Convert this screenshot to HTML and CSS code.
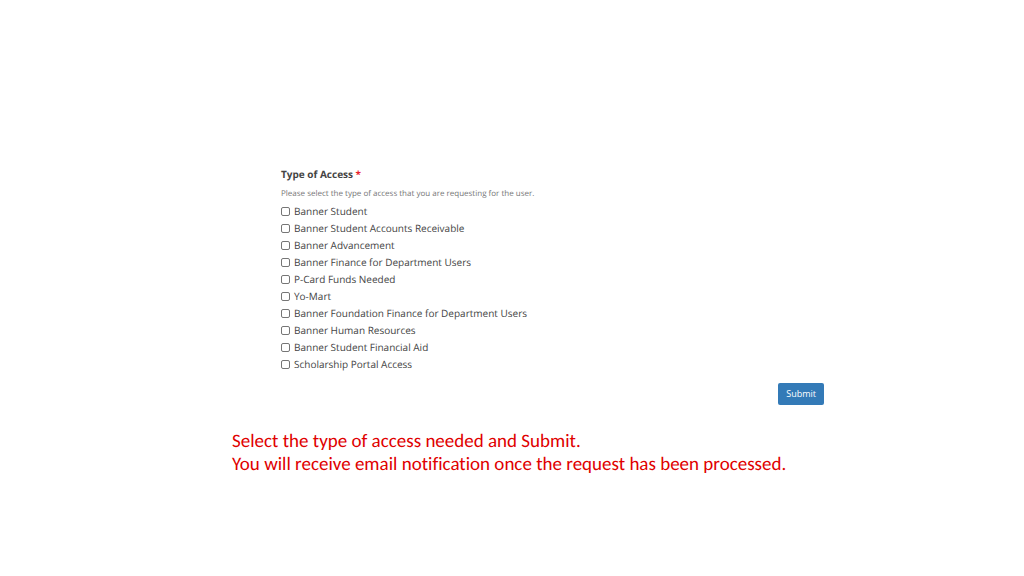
FILE: index.html
```
<!DOCTYPE html>
<html lang="en">
<head>
    <meta charset="UTF-8">
    <meta name="viewport" content="width=device-width, initial-scale=1.0">
    <title>Type of Access</title>
    <link rel="stylesheet" href="styles.css">
</head>
<body>
    <main>
        <form class="access-form">
            <fieldset>
                <legend>Type of Access <span class="required">*</span></legend>
                <p class="hint">Please select the type of access that you are requesting for the user.</p>
                <label><input type="checkbox" name="access"> Banner Student</label>
                <label><input type="checkbox" name="access"> Banner Student Accounts Receivable</label>
                <label><input type="checkbox" name="access"> Banner Advancement</label>
                <label><input type="checkbox" name="access"> Banner Finance for Department Users</label>
                <label><input type="checkbox" name="access"> P-Card Funds Needed</label>
                <label><input type="checkbox" name="access"> Yo-Mart</label>
                <label><input type="checkbox" name="access"> Banner Foundation Finance for Department Users</label>
                <label><input type="checkbox" name="access"> Banner Human Resources</label>
                <label><input type="checkbox" name="access"> Banner Student Financial Aid</label>
                <label><input type="checkbox" name="access"> Scholarship Portal Access</label>
            </fieldset>
            <button type="submit">Submit</button>
        </form>
        <p class="note">Select the type of access needed and Submit.<br>You will receive email notification once the request has been processed.</p>
    </main>
</body>
</html>
```
FILE: styles.css
```
* {
    box-sizing: border-box;
}
body {
    margin: 0;
    background-color: white;
    font-family: "Open Sans", sans-serif;
    color: #444;
    text-rendering: geometricPrecision;
}
main {
    max-width: 624px;
    margin: 0 auto;
    padding-top: 166px;
}
.access-form {
    display: flex;
    flex-direction: column;
    margin-left: 81px;
}
fieldset {
    margin: 0;
    padding: 0;
    border: none;
    min-width: 0;
}
legend {
    padding: 0;
    font-size: 10px;
    line-height: 17px;
    font-weight: bold;
}
.required {
    color: #e8202a;
}
.hint {
    margin: 3px 0 2px;
    font-size: 8px;
    line-height: 15px;
    color: #777;
}
label {
    display: flex;
    align-items: center;
    gap: 4px;
    font-size: 10px;
    line-height: 17px;
}
input {
    appearance: none;
    width: 9px;
    height: 9px;
    margin: 0;
    border: 1px solid #767676;
    border-radius: 2px;
    background-color: white;
}
input:checked {
    background-color: #337ab7;
}
button {
    align-self: flex-end;
    margin-top: 10px;
    padding: 0 8px;
    border: none;
    border-radius: 2px;
    background-color: #337ab7;
    color: white;
    font-family: inherit;
    font-size: 9px;
    line-height: 22px;
}
.note {
    margin: 25px 0 0 32px;
    color: #e00000;
    font-family: Carlito, Calibri, Lato, sans-serif;
    font-size: 19px;
    line-height: 23px;
    font-variant-ligatures: none;
}
```
